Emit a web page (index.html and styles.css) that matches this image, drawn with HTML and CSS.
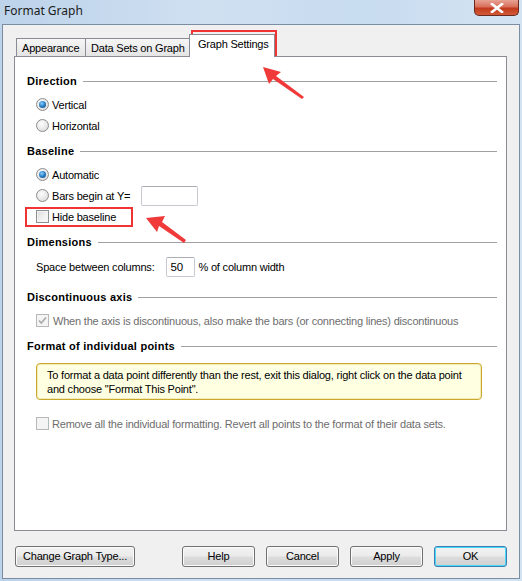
FILE: index.html
```html
<!DOCTYPE html>
<html>
<head>
<meta charset="utf-8">
<link rel="stylesheet" href="styles.css">
</head>
<body>
<div class="window">
  <div class="titlebar">
    <span class="title">Format Graph</span>
    <div class="close"><svg width="14" height="10" viewBox="0 0 14 10"><path d="M2 1 L12 9 M12 1 L2 9" stroke="#fff" stroke-width="2.6" stroke-linecap="square"/><path d="M2 1 L12 9 M12 1 L2 9" stroke="#fff" stroke-width="1.2"/></svg></div>
  </div>
  <div class="client">
    <div class="tabs">
      <div class="tab t1">Appearance</div>
      <div class="tab t2">Data Sets on Graph</div>
      <div class="tab sel">Graph Settings</div>
    </div>
    <div class="panel">
      <div class="hdr first"><span>Direction</span><i></i></div>
      <div class="row r1"><span class="radio on"></span><span>Vertical</span></div>
      <div class="row"><span class="radio"></span><span>Horizontal</span></div>

      <div class="hdr"><span>Baseline</span><i></i></div>
      <div class="row r1"><span class="radio on"></span><span>Automatic</span></div>
      <div class="row"><span class="radio"></span><span>Bars begin at Y=</span><span class="input wide"></span></div>
      <div class="row"><span class="check"></span><span>Hide baseline</span></div>

      <div class="hdr"><span>Dimensions</span><i></i></div>
      <div class="row r1 rin"><span class="plain">Space between columns:</span><span class="input narrow">50</span><span>% of column width</span></div>

      <div class="hdr h-disc"><span>Discontinuous axis</span><i></i></div>
      <div class="row r1 dis"><span class="check dchk"><svg width="11" height="11" viewBox="0 0 11 11"><path d="M2 5.5 L4.3 8 L9 2.5" fill="none" stroke="#a8a8a8" stroke-width="1.6"/></svg></span><span>When the axis is discontinuous, also make the bars (or connecting lines) discontinuous</span></div>

      <div class="hdr h-fmt"><span>Format of individual points</span><i></i></div>
      <div class="note">To format a data point differently than the rest, exit this dialog, right click on the data point and choose "Format This Point".</div>
      <div class="row dis rem"><span class="check dbox"></span><span>Remove all the individual formatting. Revert all points to the format of their data sets.</span></div>
    </div>
    <div class="buttons">
      <div class="btn change">Change Graph Type...</div>
      <div class="btngroup">
        <div class="btn">Help</div>
        <div class="btn">Cancel</div>
        <div class="btn">Apply</div>
        <div class="btn ok">OK</div>
      </div>
    </div>
  </div>
  <div class="mark m1"></div>
  <div class="mark m2"></div>
  <svg class="arrows" width="522" height="581" viewBox="0 0 522 581">
    <path d="M263 67 L281 72 L276 76 L304 97 L302 99 L273 79 L269 84 Z" fill="#f03a3a"/>
    <path d="M146 218 L165 216 L162 222 L186 240 L184 243 L159 226 L157 232 Z" fill="#f03a3a"/>
  </svg>
</div>
</body>
</html>
```

FILE: styles.css
```css
html, body {
  margin: 0;
  padding: 0;
}
body {
  font-family: "Liberation Sans", Arial, sans-serif;
  font-size: 11px;
  letter-spacing: -0.2px;
  color: #000;
}
.window {
  position: relative;
  width: 522px;
  height: 581px;
  background: linear-gradient(90deg, #bdd3ea 0%, #cfe0f1 40%, #c8dcf0 70%, #d4e3f2 100%);
  overflow: hidden;
}
.titlebar {
  height: 24px;
  display: flex;
  justify-content: space-between;
  align-items: flex-start;
}
.title {
  font-family: "Noto Sans", "Open Sans", sans-serif;
  letter-spacing: 0;
  font-size: 12px;
  color: #1a1a1a;
  margin: 2px 0 0 4px;
  line-height: 17px;
}
.close {
  width: 45px;
  height: 16px;
  margin-right: 3px;
  box-sizing: border-box;
  border: 1px solid #6a2a20;
  border-top: none;
  border-radius: 0 0 5px 5px;
  background: linear-gradient(#e8a394 0%, #d8705c 45%, #c23a1c 55%, #d15a38 100%);
  display: flex;
  align-items: center;
  justify-content: center;
}
.client {
  margin: 0 2px;
  height: 555px;
  box-sizing: border-box;
  border: 1px solid #7b8da2;
  background: #f0f0f0;
  padding: 7px 12px 0 11px;
}
.tabs {
  display: flex;
  align-items: flex-end;
  height: 24px;
  padding-left: 2px;
  position: relative;
  z-index: 1;
}
.tab {
  height: 18px;
  box-sizing: border-box;
  border: 1px solid #898c95;
  border-bottom: none;
  background: linear-gradient(#f6f6f6, #e4e4e4);
  padding: 0 5px;
  line-height: 19px;
  white-space: nowrap;
  overflow: hidden;
}
.t1 { width: 70px; margin-right: -1px; }
.t2 { width: 105px; }
.tab.sel {
  height: 23px;
  width: 86px;
  margin-left: -1px;
  margin-bottom: -1px;
  background: #fff;
  line-height: 18px;
  padding: 0 0 0 8px;
}
.panel {
  height: 475px;
  box-sizing: border-box;
  border: 1px solid #898c95;
  background: #fff;
  padding: 16px 9px 0 12px;
}
.hdr {
  display: flex;
  align-items: center;
  height: 16px;
  margin-top: 7px;
  font-weight: bold;
  letter-spacing: 0.25px;
}
.hdr.first { margin-top: 0; }
.hdr i {
  flex: 1;
  height: 1px;
  background: #a0a0a0;
  margin-left: 6px;
  margin-top: 1px;
}
.h-disc { margin-top: 11px; }
.h-fmt { margin-top: 7px; }
.row {
  display: flex;
  align-items: center;
  height: 21px;
  padding-left: 9px;
  white-space: nowrap;
}
.row.r1 { margin-top: 5px; }
.row.rin { height: 22px; margin-top: 6px; }
.radio {
  width: 13px;
  height: 13px;
  box-sizing: border-box;
  border-radius: 50%;
  border: 1px solid #8b8b8b;
  background: radial-gradient(circle at 40% 35%, #fdfdfd 0%, #e8e8e8 55%, #cfcfcf 100%);
  margin-right: 3px;
  position: relative;
}
.radio.on::after {
  content: "";
  position: absolute;
  left: 2px;
  top: 2px;
  width: 7px;
  height: 7px;
  border-radius: 50%;
  background: radial-gradient(circle at 40% 35%, #8fd0ff 0%, #2d84c9 45%, #0d3e7a 100%);
}
.check {
  width: 13px;
  height: 13px;
  box-sizing: border-box;
  border: 1px solid #8e8f8f;
  background: linear-gradient(135deg, #d8d8d8 0%, #efefef 50%, #fbfbfb 100%);
  box-shadow: inset 0 0 0 1px #f4f4f4;
  margin-right: 3px;
  display: flex;
  align-items: center;
  justify-content: center;
}
.check.dchk, .check.dbox {
  border-color: #b8b8b8;
  background: #f4f4f4;
  box-shadow: none;
}
.check.dchk { margin-right: 4px; }
.dis { color: #6d6d6d; }
.input {
  height: 20px;
  box-sizing: border-box;
  border: 1px solid #c6c9cf;
  border-top-color: #abadb3;
  border-radius: 2px;
  background: #fff;
  display: inline-block;
}
.input.wide {
  width: 57px;
  margin-left: 11px;
}
.input.narrow {
  width: 29px;
  height: 20px;
  margin: 0 4px 0 11px;
  padding-left: 4px;
  line-height: 19px;
  font-size: 11.5px;
}
.note {
  margin: 9px 0 0 9px;
  width: 446px;
  height: 37px;
  box-sizing: border-box;
  border: 1px solid #c9a92c;
  box-shadow: inset 0 0 0 1px #f4ecb8;
  border-radius: 4px;
  background: #ffffe1;
  padding: 4px 10px 0 10px;
  line-height: 14px;
}
.rem { margin-top: 13px; }
.buttons {
  display: flex;
  justify-content: space-between;
  margin-top: 15px;
  padding-left: 1px;
}
.btngroup {
  display: flex;
  gap: 11px;
}
.btn {
  height: 21px;
  width: 73px;
  box-sizing: border-box;
  border: 1px solid #707070;
  border-radius: 3px;
  background: linear-gradient(#f2f2f2 0%, #ebebeb 48%, #dddddd 52%, #cfcfcf 100%);
  box-shadow: inset 0 0 0 1px #fbfbfb;
  text-align: center;
  line-height: 19px;
}
.btn.change { width: 120px; }
.btn.ok {
  border-color: #3c7fb1;
  box-shadow: inset 0 0 0 1px #48d9f8;
}
.mark {
  position: absolute;
  box-sizing: border-box;
  border: 2px solid #f03434;
}
.m1 { left: 191px; top: 30px; width: 86px; height: 26px; }
.m2 { left: 25px; top: 207px; width: 108px; height: 20px; }
.arrows {
  position: absolute;
  left: 0;
  top: 0;
  pointer-events: none;
}
```
